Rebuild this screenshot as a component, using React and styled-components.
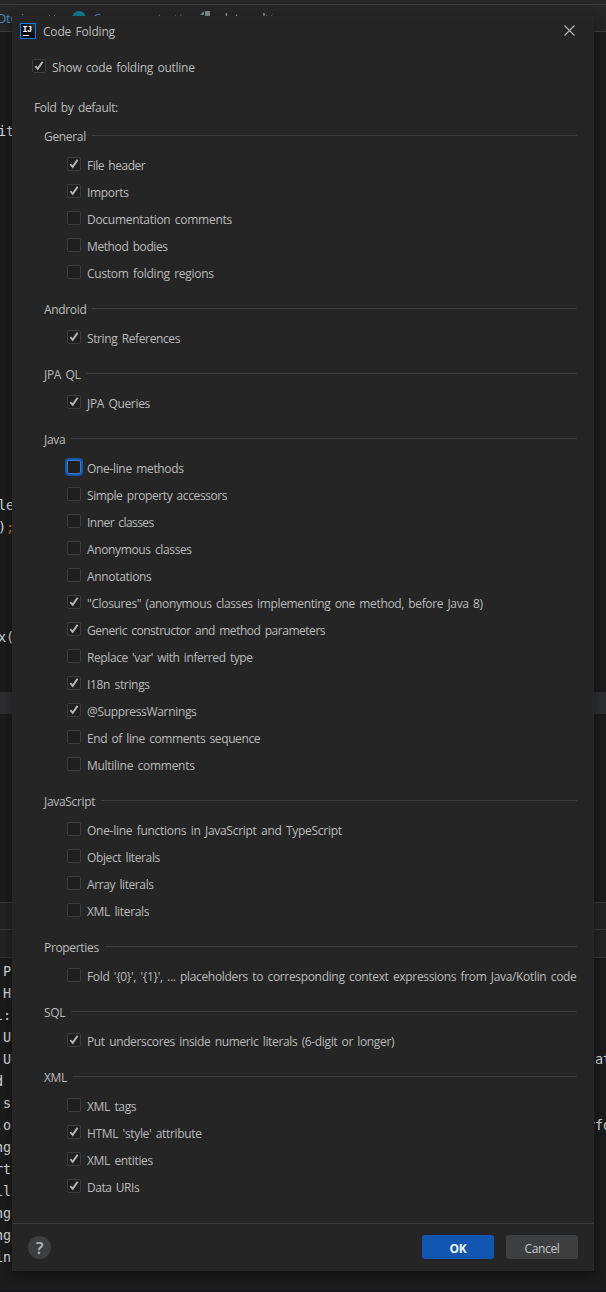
import React from 'react';
import styled, { createGlobalStyle, css } from 'styled-components';

const Global = createGlobalStyle`
  * { box-sizing: border-box; }
  body {
    margin: 0;
    background: #1b1b1b;
    color: #bbbbbb;
    font-family: "Open Sans", "Noto Sans CJK KR", sans-serif;
    font-size: 12px;
    letter-spacing: -0.33px;
    word-spacing: 1.6px;
  }
`;

/* ---------- editor window behind the dialog ---------- */

const Window = styled.div`
  position: relative;
  width: 606px;
  height: 1292px;
  overflow: hidden;
  display: flex;
  flex-direction: column;
`;

const TopStrip = styled.div`
  flex: none;
  height: 5px;
  background: #262626;
  border-bottom: 1px solid #3c3c3c;
`;

const TabBar = styled.div`
  flex: none;
  display: flex;
  height: 27px;
  background: #262626;
  border-bottom: 1px solid #3c3c3c;
`;

const Tab = styled.div`
  flex: none;
  display: flex;
  align-items: center;
  width: ${p => p.$width}px;
  padding-left: ${p => p.$indent || 0}px;
  line-height: 30px;
  font-size: 13px;
  color: ${p => p.$color};
  white-space: nowrap;
`;

const TabIcon = styled.svg`
  flex: none;
  margin-right: ${p => p.$gap}px;
`;

const TabClose = styled.svg`
  flex: none;
  margin-left: auto;
`;

const Code = styled.div`
  flex: none;
  height: ${p => p.$height}px;
  padding-top: ${p => p.$top || 0}px;
  overflow: hidden;
  font-family: "DejaVu Sans Mono", monospace;
  font-size: 13.5px;
  letter-spacing: -0.1px;
  word-spacing: 0;
  color: #d0d4d8;
`;

const CodeLine = styled.div`
  display: flex;
  justify-content: space-between;
  height: 22px;
  line-height: 23px;
  white-space: pre;
  background: ${p => (p.$active ? '#2c2d30' : 'transparent')};
`;

const LineStart = styled.span`
  margin-left: ${p => p.$shift}px;
`;

const LineEnd = styled.span`
  width: 19px;
`;

const Punctuation = styled.span`
  color: #cc7832;
`;

const ToolStrip = styled.div`
  flex: none;
  height: ${p => p.$height}px;
  background: #232323;
  border-top: 1px solid #363636;
`;

const StatusEdge = styled.div`
  flex: none;
  height: 1px;
  margin-top: auto;
  background: #170f14;
`;

/* ---------- dialog ---------- */

const Dialog = styled.div`
  position: absolute;
  left: 12px;
  top: 16px;
  width: 582px;
  height: 1255px;
  display: flex;
  flex-direction: column;
  background: #252525;
  border: 1px solid #272727;
  box-shadow: 0 3px 10px rgba(0, 0, 0, 0.4);
`;

const TitleBar = styled.div`
  display: flex;
  align-items: center;
  height: 27px;
  padding: 0 18px 0 7px;
`;

const Title = styled.span`
  margin-left: 7px;
  padding-top: 2px;
  letter-spacing: -0.2px;
`;

const CloseIcon = styled.svg`
  margin-left: auto;
`;

const Content = styled.div`
  flex: 1;
  padding: 9px 16px 0 19px;
`;

const Intro = styled.div`
  padding-left: 2px;
  line-height: 23px;
  margin: 16px 0 6px;
`;

const Section = styled.section`
  margin: 0 0 12px 12px;
`;

const Heading = styled.div`
  display: flex;
  align-items: center;
  height: 21px;
  margin-bottom: 5px;
  line-height: 23px;

  span { padding-top: 2px; }

  &::after {
    content: '';
    flex: 1;
    height: 1px;
    margin-left: 6px;
    background: #3d3d3d;
  }
`;

const Options = styled.div`
  padding-left: 23px;
`;

const Option = styled.label`
  display: flex;
  height: 27px;
  line-height: 29px;
  white-space: nowrap;
  letter-spacing: ${p => p.$tracking || -0.33}px;
`;

const Box = styled.span`
  flex: none;
  width: 14px;
  height: 14px;
  margin: 6px 6px 0 0;
  border: 1px solid #3c3c3c;
  border-radius: 2px;
  background: #1f1f1f;

  svg { display: block; }

  ${p => p.$focused && css`
    border-color: #3f78bd;
    box-shadow: 0 0 0 2px #1457ae;
  `}
`;

const Footer = styled.div`
  display: flex;
  align-items: center;
  height: 47px;
  padding: 0 15px;
  border-top: 1px solid #3d3d3d;
`;

const Help = styled.button`
  width: 23px;
  height: 23px;
  margin: 1px auto 0 0;
  padding: 0;
  border: 0;
  border-radius: 50%;
  background: #3c3e40;
  color: #b8b8b8;
  font: 600 17px/23px "Open Sans", sans-serif;
`;

const Button = styled.button`
  width: 72px;
  height: 24px;
  margin-left: 12px;
  padding: 2px 0 0;
  border: 0;
  border-radius: 3px;
  background: ${p => (p.$primary ? '#1157b1' : '#3c3e40')};
  color: ${p => (p.$primary ? '#f4f4f4' : '#c8c8c8')};
  font-family: inherit;
  font-size: 12px;
  font-weight: ${p => (p.$primary ? 700 : 400)};
  letter-spacing: inherit;
`;

const Logo = () => (
  <svg width="16" height="16" viewBox="0 0 16 16">
    <defs>
      <linearGradient id="logo" x1="0" y1="1" x2="1" y2="0">
        <stop offset="0.4" stopColor="#000" />
        <stop offset="1" stopColor="#3a3a3a" />
      </linearGradient>
    </defs>
    <rect x="0.5" y="0.5" width="15" height="15" fill="url(#logo)" stroke="#087cfa" />
    <text x="2.4" y="9" fill="#fff" fontFamily="Liberation Mono" fontWeight="700" fontSize="8.5" letterSpacing="-0.5" wordSpacing="0">IJ</text>
    <rect x="3" y="12" width="6" height="1" fill="#fff" />
  </svg>
);

const Cross = () => (
  <TabClose width="8" height="8" viewBox="0 0 8 8" stroke="#606060">
    <path d="M0.5 0.5L7.5 7.5M7.5 0.5L0.5 7.5" />
  </TabClose>
);

const Check = ({ label, on, focused, tracking }) => (
  <Option $tracking={tracking}>
    <Box $focused={focused}>
      {on && (
        <svg width="12" height="12" viewBox="0 0 12 12" fill="none" stroke="#b4b4b4" strokeWidth="2">
          <path d="M2.4 6.2L4.7 8.8L9.6 1.8" />
        </svg>
      )}
    </Box>
    {label}
  </Option>
);

const opt = (label, on = false, tracking) => ({ label, on, tracking });

const sections = [
  ['General', [
    opt('File header', true, -0.48), opt('Imports', true), opt('Documentation comments', false, -0.28),
    opt('Method bodies', false, -0.4), opt('Custom folding regions', false, -0.27),
  ]],
  ['Android', [opt('String References', true, -0.38)]],
  ['JPA QL', [opt('JPA Queries', true)]],
  ['Java', [
    { ...opt('One-line methods'), focused: true },
    opt('Simple property accessors', false, -0.4),
    opt('Inner classes', false, -0.54),
    opt('Anonymous classes', false, -0.37),
    opt('Annotations'),
    opt('"Closures" (anonymous classes implementing one method, before Java 8)', true, -0.36),
    opt('Generic constructor and method parameters', true, -0.47),
    opt("Replace 'var' with inferred type", false, -0.41),
    opt('I18n strings', true),
    opt('@SuppressWarnings', true),
    opt('End of line comments sequence', false, -0.4),
    opt('Multiline comments', false, -0.28),
  ]],
  ['JavaScript', [
    opt('One-line functions in JavaScript and TypeScript', false, -0.28),
    opt('Object literals', false, -0.38), opt('Array literals', false, -0.4), opt('XML literals'),
  ]],
  ['Properties', [
    opt("Fold '{0}', '{1}', ... placeholders to corresponding context expressions from Java/Kotlin code"),
  ]],
  ['SQL', [opt('Put underscores inside numeric literals (6-digit or longer)', true, -0.36)]],
  ['XML', [
    opt('XML tags'), opt("HTML 'style' attribute", true), opt('XML entities', true), opt('Data URIs', true, -0.45),
  ]],
];

const editor = { 4: 'it', 21: 'le', 22: <>)<Punctuation>;</Punctuation></>, 27: 'x(' };

const consoleLines = [
  [' P'], [' H'], ['l:'], [' U'], [' U', 'lat'], ['d .'], [' s'], ['.o', 'rfo'],
  ['ng'], ['rt'], ['ll'], ['ng'], ['ng'], ['in'],
];

export default function App() {
  return (
    <Window>
      <Global />
      <TopStrip />
      <TabBar>
        <Tab $width={56} $color="#4a88b8"><LineStart $shift={-3}>Dto.java</LineStart><Cross /></Tab>
        <Tab $width={126} $indent={16} $color="#4a88b8">
          <TabIcon $gap={7} width="14" height="14" viewBox="0 0 14 14"><circle cx="7" cy="7" r="7" fill="#0e7c91" /></TabIcon>
          Component
          <Cross />
        </Tab>
        <Tab $width={91} $indent={18} $color="#a9b0b6">
          <TabIcon $gap={8} width="12" height="14" viewBox="0 0 12 14" fill="#7d8890">
            <path d="M0 4L4 0V4ZM5 0H10V14H0V5H5Z" />
          </TabIcon>
          data.sql
          <Cross />
        </Tab>
      </TabBar>
      <Code $height={870}>
        {Array.from({ length: 39 }, (_, i) => (
          <CodeLine key={i} $active={i === 30}><LineStart $shift={-2}>{editor[i]}</LineStart></CodeLine>
        ))}
      </Code>
      <ToolStrip $height={27} />
      <ToolStrip $height={28} />
      <ToolStrip $height={1} />
      <Code $height={330} $top={2}>
        {consoleLines.map(([start, end], i) => (
          <CodeLine key={i}><LineStart $shift={-5}>{start}</LineStart>{end && <LineEnd>{end}</LineEnd>}</CodeLine>
        ))}
      </Code>
      <StatusEdge />

      <Dialog>
        <TitleBar>
          <Logo />
          <Title>Code Folding</Title>
          <CloseIcon width="11" height="11" viewBox="0 0 11 11" stroke="#b4b4b4" strokeWidth="1.1">
            <path d="M0.5 0.5L10.5 10.5M10.5 0.5L0.5 10.5" />
          </CloseIcon>
        </TitleBar>
        <Content>
          <Check label="Show code folding outline" on tracking={-0.26} />
          <Intro>Fold by default:</Intro>
          {sections.map(([name, items]) => (
            <Section key={name}>
              <Heading><span>{name}</span></Heading>
              <Options>
                {items.map(item => <Check key={item.label} {...item} />)}
              </Options>
            </Section>
          ))}
        </Content>
        <Footer>
          <Help>?</Help>
          <Button $primary>OK</Button>
          <Button>Cancel</Button>
        </Footer>
      </Dialog>
    </Window>
  );
}
